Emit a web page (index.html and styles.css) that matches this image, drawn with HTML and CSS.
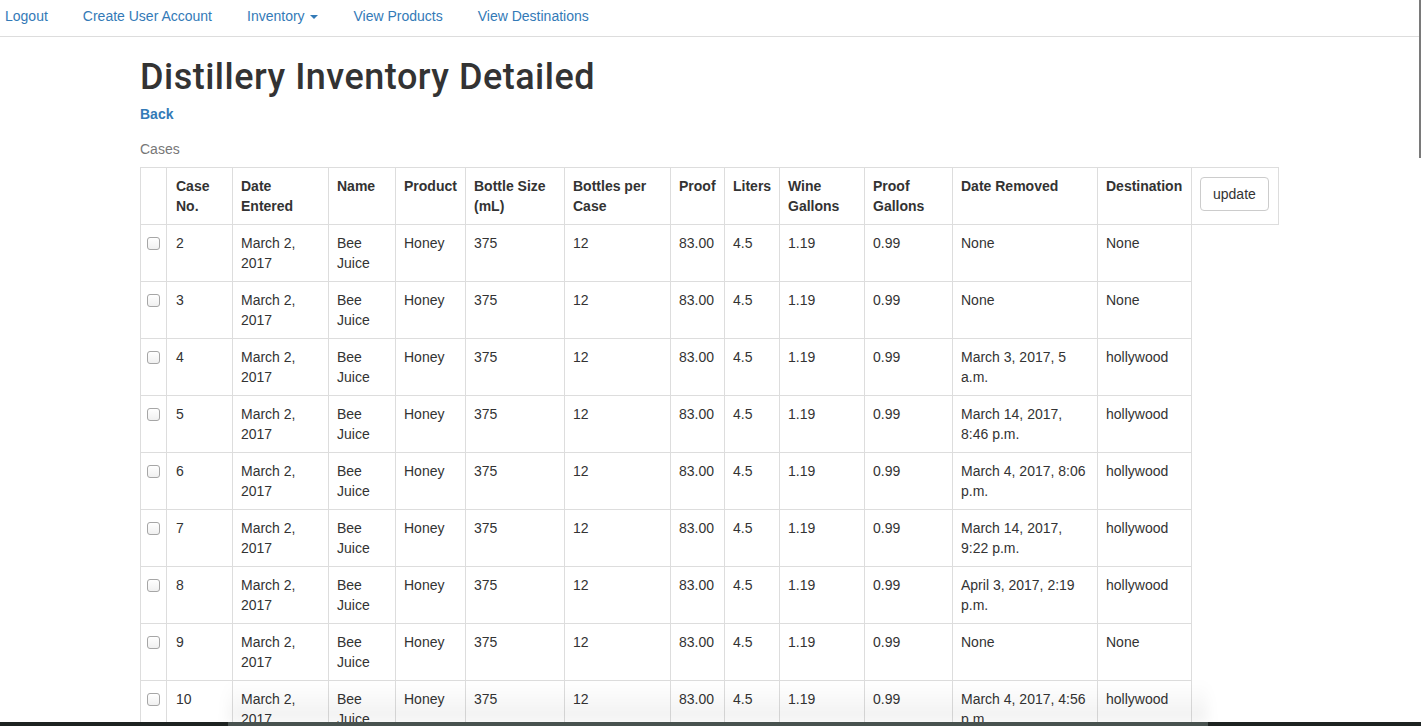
FILE: index.html
```html
<!DOCTYPE html>
<html lang="en">
<head>
<meta charset="utf-8">
<title>Distillery Inventory Detailed</title>
<link rel="stylesheet" href="styles.css">
</head>
<body>
<nav class="navbar">
  <ul class="nav">
    <li><a href="#">Logout</a></li>
    <li><a href="#">Create User Account</a></li>
    <li><a href="#">Inventory <span class="caret"></span></a></li>
    <li><a href="#">View Products</a></li>
    <li><a href="#">View Destinations</a></li>
  </ul>
</nav>
<div class="container">
  <h1 class="title">Distillery Inventory Detailed</h1>
  <a class="back" href="#">Back</a>
  <form class="cases-form">
  <table class="table">
    <caption>Cases</caption>
    <colgroup>
      <col class="c-chk"><col class="c-case"><col class="c-date"><col class="c-name"><col class="c-prod"><col class="c-size"><col class="c-bpc"><col class="c-proof"><col class="c-lit"><col class="c-wg"><col class="c-pg"><col class="c-rem"><col class="c-dest"><col class="c-upd">
    </colgroup>
    <tr class="head">
      <th></th><th>Case No.</th><th>Date Entered</th><th>Name</th><th>Product</th><th>Bottle Size (mL)</th><th>Bottles per Case</th><th>Proof</th><th>Liters</th><th>Wine Gallons</th><th>Proof Gallons</th><th>Date Removed</th><th>Destination</th><th><button type="button" class="btn">update</button></th>
    </tr>
    <tr><td class="chk"><input type="checkbox"></td><td>2</td><td>March 2, 2017</td><td>Bee Juice</td><td>Honey</td><td>375</td><td>12</td><td>83.00</td><td>4.5</td><td>1.19</td><td>0.99</td><td>None</td><td>None</td></tr>
    <tr><td class="chk"><input type="checkbox"></td><td>3</td><td>March 2, 2017</td><td>Bee Juice</td><td>Honey</td><td>375</td><td>12</td><td>83.00</td><td>4.5</td><td>1.19</td><td>0.99</td><td>None</td><td>None</td></tr>
    <tr><td class="chk"><input type="checkbox"></td><td>4</td><td>March 2, 2017</td><td>Bee Juice</td><td>Honey</td><td>375</td><td>12</td><td>83.00</td><td>4.5</td><td>1.19</td><td>0.99</td><td>March 3, 2017, 5 a.m.</td><td>hollywood</td></tr>
    <tr><td class="chk"><input type="checkbox"></td><td>5</td><td>March 2, 2017</td><td>Bee Juice</td><td>Honey</td><td>375</td><td>12</td><td>83.00</td><td>4.5</td><td>1.19</td><td>0.99</td><td>March 14, 2017, 8:46 p.m.</td><td>hollywood</td></tr>
    <tr><td class="chk"><input type="checkbox"></td><td>6</td><td>March 2, 2017</td><td>Bee Juice</td><td>Honey</td><td>375</td><td>12</td><td>83.00</td><td>4.5</td><td>1.19</td><td>0.99</td><td>March 4, 2017, 8:06 p.m.</td><td>hollywood</td></tr>
    <tr><td class="chk"><input type="checkbox"></td><td>7</td><td>March 2, 2017</td><td>Bee Juice</td><td>Honey</td><td>375</td><td>12</td><td>83.00</td><td>4.5</td><td>1.19</td><td>0.99</td><td>March 14, 2017, 9:22 p.m.</td><td>hollywood</td></tr>
    <tr><td class="chk"><input type="checkbox"></td><td>8</td><td>March 2, 2017</td><td>Bee Juice</td><td>Honey</td><td>375</td><td>12</td><td>83.00</td><td>4.5</td><td>1.19</td><td>0.99</td><td>April 3, 2017, 2:19 p.m.</td><td>hollywood</td></tr>
    <tr><td class="chk"><input type="checkbox"></td><td>9</td><td>March 2, 2017</td><td>Bee Juice</td><td>Honey</td><td>375</td><td>12</td><td>83.00</td><td>4.5</td><td>1.19</td><td>0.99</td><td>None</td><td>None</td></tr>
    <tr><td class="chk"><input type="checkbox"></td><td>10</td><td>March 2, 2017</td><td>Bee Juice</td><td>Honey</td><td>375</td><td>12</td><td>83.00</td><td>4.5</td><td>1.19</td><td>0.99</td><td>March 4, 2017, 4:56 p.m.</td><td>hollywood</td></tr>
  </table>
  </form>
</div>
<div class="scroll-thumb"></div>
<div class="dock-shadow"></div>
<div class="dock"><div class="dock-shelf"></div></div>
</body>
</html>
```

FILE: styles.css
```css
* { box-sizing: border-box; }
html, body { margin: 0; padding: 0; }
body {
  font-family: "Liberation Sans", Arial, sans-serif;
  font-size: 14px;
  line-height: 20px;
  color: #333;
  background: #fff;
  overflow: hidden;
}
a { color: #337ab7; text-decoration: none; }

.navbar {
  height: 37px;
  border-bottom: 1px solid #ddd;
}
.nav {
  list-style: none;
  margin: 0;
  padding: 0;
  display: flex;
}
.nav li a {
  display: block;
  padding: 6px 17.5px 10px;
}
.nav li:first-child a { padding-left: 5px; }
.caret {
  display: inline-block;
  width: 0; height: 0;
  margin-left: 2px;
  vertical-align: middle;
  border-top: 4px solid #337ab7;
  border-left: 4px solid transparent;
  border-right: 4px solid transparent;
}

.container {
  width: 1170px;
  margin: 0 125px;
  padding: 0 15px;
}
.title {
  font-family: Roboto, "Liberation Sans", Arial, sans-serif;
  font-size: 36px;
  font-weight: 500;
  line-height: 39.6px;
  margin: 21px 0 6px;
  color: #333;
  letter-spacing: 0.5px;
}
.back {
  display: block;
  width: max-content;
  line-height: 20px;
  font-weight: 600;
  margin-bottom: 7px;
}
.cases-form { margin: 0; }

.table {
  width: 1138px;
  table-layout: fixed;
  border-collapse: collapse;
  border-spacing: 0;
}
.table caption {
  text-align: left;
  color: #777;
  padding: 8px 0;
}
.c-chk { width: 26px; }
.c-case { width: 66px; }
.c-date { width: 96px; }
.c-name { width: 67px; }
.c-prod { width: 70px; }
.c-size { width: 99px; }
.c-bpc { width: 106px; }
.c-proof { width: 54px; }
.c-lit { width: 55px; }
.c-wg { width: 85px; }
.c-pg { width: 88px; }
.c-rem { width: 145px; }
.c-dest { width: 94px; }
.c-upd { width: 87px; }

.table th, .table td {
  border: 1px solid #ddd;
  padding: 8px;
  vertical-align: top;
  text-align: left;
  line-height: 20px;
  height: 57px;
}
.table th { font-weight: bold; }
.table td:nth-child(2), .table th:nth-child(2) { padding-left: 9px; }
.table th:first-child, .table td.chk { padding: 8px 4px 8px 6px; }
.table td.chk input {
  -webkit-appearance: none;
  appearance: none;
  display: block;
  width: 13px;
  height: 13px;
  margin: 4px 0 0;
  border: 1px solid #a6a6a6;
  border-radius: 3px;
  background: linear-gradient(#fff, #f0f0f0);
}

.btn {
  font-family: inherit;
  font-size: 14px;
  line-height: 20px;
  color: #333;
  background: #fff;
  border: 1px solid #ccc;
  border-radius: 4px;
  padding: 6px 12px;
  margin-top: 1px;
}

.scroll-thumb {
  position: fixed;
  top: 0;
  right: 0;
  width: 2px;
  height: 158px;
  background: #7a7a7a;
}
.dock-shadow {
  position: fixed;
  left: 228px;
  width: 980px;
  bottom: 4px;
  height: 40px;
  background: linear-gradient(rgba(0,0,0,0), rgba(0,0,0,0.06));
  filter: blur(6px);
}
.dock {
  position: fixed;
  left: 0; right: 0; bottom: 0;
  height: 4px;
  background: #1d2321;
}
.dock-shelf {
  margin-left: 228px;
  width: 980px;
  height: 4px;
  background: #48524f;
}
```
